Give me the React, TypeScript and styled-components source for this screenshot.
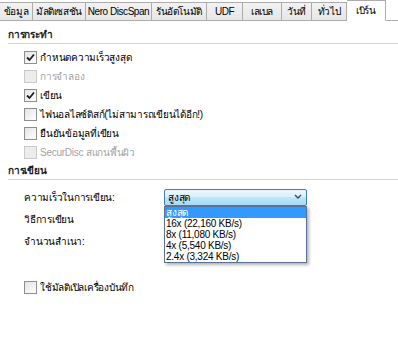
import React from 'react';
import styled, { createGlobalStyle } from 'styled-components';

const GlobalStyle = createGlobalStyle`
  html, body { margin: 0; padding: 0; background: #fff; }
  body {
    font-family: Tahoma, "Liberation Sans", "Noto Sans", sans-serif;
    font-size: 10px;
    letter-spacing: -0.25px;
    color: #000;
  }
`;

const Root = styled.div`
  width: 398px;
  height: 349px;
  overflow: hidden;
  background: #fff;
`;

const TabStrip = styled.div`
  display: flex;
  align-items: flex-end;
  height: 21px;
  box-sizing: border-box;
  border-bottom: 1px solid #acacac;
  background: #fff;
`;

const Tab = styled.div<{ $w: number; $active?: boolean }>`
  box-sizing: border-box;
  width: ${(p) => p.$w}px;
  height: ${(p) => (p.$active ? 21 : 19)}px;
  margin-bottom: -1px;
  display: flex;
  align-items: center;
  justify-content: center;
  white-space: nowrap;
  letter-spacing: -0.45px;
  border: 1px solid #acacac;
  border-left: none;
  border-bottom-color: ${(p) => (p.$active ? '#fff' : '#acacac')};
  background: ${(p) => (p.$active ? '#fff' : 'linear-gradient(#f2f2f2, #e6e6e6)')};
  color: #000;
`;

const Pane = styled.div`
  padding: 7px 0 0 8px;
  display: flex;
  flex-direction: column;
`;

const SectionTitle = styled.div<{ $top: number }>`
  margin-top: ${(p) => p.$top}px;
  height: 14px;
  line-height: 14px;
  font-weight: bold;
  color: #1b1b1b;
`;

const Divider = styled.div`
  height: 1px;
  margin-top: 1px;
  background: #d5d5d5;
`;

const CheckList = styled.div`
  display: flex;
  flex-direction: column;
  margin-top: 4px;
`;

const CheckRow = styled.div<{ $disabled?: boolean }>`
  height: 19px;
  display: flex;
  align-items: center;
  gap: 3px;
  padding-left: 16px;
  color: ${(p) => (p.$disabled ? '#a3a3a3' : '#000')};
`;

const Box = styled.span<{ $disabled?: boolean }>`
  box-sizing: border-box;
  width: 13px;
  height: 13px;
  display: flex;
  align-items: center;
  justify-content: center;
  border: 1px solid ${(p) => (p.$disabled ? '#cacaca' : '#8e8f8f')};
  background: ${(p) => (p.$disabled ? '#ececec' : 'linear-gradient(135deg, #e4e4e4, #ffffff)')};
`;

const FieldGrid = styled.div`
  display: grid;
  grid-template-columns: 140px 143px;
  grid-auto-rows: 22px;
  margin-top: 6px;
  padding-left: 16px;
  align-items: center;
`;

const FieldLabel = styled.div`
  white-space: nowrap;
`;

const SelectWrap = styled.div`
  position: relative;
`;

const Select = styled.div`
  box-sizing: border-box;
  height: 17px;
  display: flex;
  align-items: center;
  justify-content: space-between;
  padding: 0 4px 0 3px;
  border: 1px solid #3c7fb1;
  border-radius: 2px;
  background: linear-gradient(#eaf6fd, #d9f0fc 50%, #bee6fd 50%, #a7d9f5);
`;

const DropList = styled.ul`
  position: absolute;
  top: 17px;
  left: 0;
  width: 143px;
  box-sizing: border-box;
  margin: 0;
  padding: 0;
  list-style: none;
  background: #fff;
  border: 1px solid #5a7394;
  box-shadow: 2px 2px 3px rgba(0, 0, 0, 0.3);
  z-index: 2;
`;

const DropItem = styled.li<{ $selected?: boolean }>`
  height: 11px;
  line-height: 11px;
  padding-left: 1px;
  white-space: nowrap;
  background: ${(p) => (p.$selected ? '#3399ff' : 'transparent')};
  color: ${(p) => (p.$selected ? '#fff' : '#000')};
`;

const BottomCheck = styled.div`
  margin-top: 26px;
`;

const tabs = [
  { label: 'ข้อมูล', w: 33 },
  { label: 'มัลติเซสชัน', w: 53 },
  { label: 'Nero DiscSpan', w: 66 },
  { label: 'รันอัตโนมัติ', w: 55 },
  { label: 'UDF', w: 36 },
  { label: 'เลเบล', w: 39 },
  { label: 'วันที่', w: 30 },
  { label: 'ทั่วไป', w: 35 },
  { label: 'เบิร์น', w: 39, active: true },
];

const actions = [
  { label: 'กำหนดความเร็วสูงสุด', checked: true },
  { label: 'การจำลอง', disabled: true },
  { label: 'เขียน', checked: true },
  { label: 'ไฟนอลไลซ์ดิสก์(ไม่สามารถเขียนได้อีก!)' },
  { label: 'ยืนยันข้อมูลที่เขียน' },
  { label: 'SecurDisc สแกนพื้นผิว', disabled: true },
];

const speeds = ['สูงสุด', '16x (22,160 KB/s)', '8x (11,080 KB/s)', '4x (5,540 KB/s)', '2.4x (3,324 KB/s)'];

const Check = ({ label, checked, disabled }: { label: string; checked?: boolean; disabled?: boolean }) => (
  <CheckRow $disabled={disabled}>
    <Box $disabled={disabled}>
      {checked && (
        <svg width="9" height="9" viewBox="0 0 9 9">
          <path d="M1 4.5 L3.5 7 L8 1.5" fill="none" stroke="#1f1f1f" strokeWidth="1.8" />
        </svg>
      )}
    </Box>
    <span>{label}</span>
  </CheckRow>
);

export default function App() {
  return (
    <Root>
      <GlobalStyle />
      <TabStrip>
        {tabs.map((t) => (
          <Tab key={t.label} $w={t.w} $active={t.active}>
            {t.label}
          </Tab>
        ))}
      </TabStrip>
      <Pane>
        <SectionTitle $top={0}>การกระทำ</SectionTitle>
        <Divider />
        <CheckList>
          {actions.map((a) => (
            <Check key={a.label} {...a} />
          ))}
        </CheckList>

        <SectionTitle $top={2}>การเขียน</SectionTitle>
        <Divider />
        <FieldGrid>
          <FieldLabel>ความเร็วในการเขียน:</FieldLabel>
          <SelectWrap>
            <Select>
              <span>สูงสุด</span>
              <svg width="8" height="6" viewBox="0 0 8 6">
                <path d="M1 1 L4 4 L7 1" fill="none" stroke="#4d4d4d" strokeWidth="1.5" />
              </svg>
            </Select>
            <DropList>
              {speeds.map((s, i) => (
                <DropItem key={s} $selected={i === 0}>
                  {s}
                </DropItem>
              ))}
            </DropList>
          </SelectWrap>
          <FieldLabel>วิธีการเขียน</FieldLabel>
          <div />
          <FieldLabel>จำนวนสำเนา:</FieldLabel>
          <div />
        </FieldGrid>
        <BottomCheck>
          <Check label="ใช้มัลติเปิลเครื่องบันทึก" />
        </BottomCheck>
      </Pane>
    </Root>
  );
}
